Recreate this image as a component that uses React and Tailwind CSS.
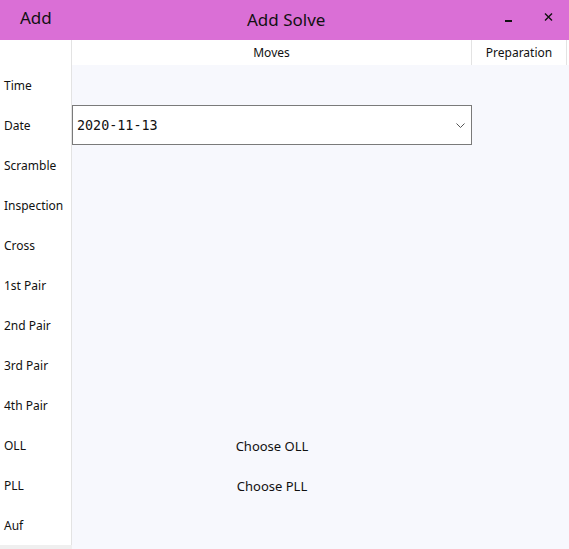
import React from 'react';

const labels = ['Time', 'Date', 'Scramble', 'Inspection', 'Cross', '1st Pair', '2nd Pair', '3rd Pair', '4th Pair', 'OLL', 'PLL', 'Auf'];

function Row({ children }) {
  return <div className="h-[40px] flex items-center">{children}</div>;
}

export default function App() {
  const font = { fontFamily: '"Noto Sans", "Open Sans", sans-serif' };
  return (
    <div className="w-[569px] h-[549px] flex flex-col bg-[#f7f8fd] text-[#111] overflow-hidden" style={font}>
      {/* title bar */}
      <div className="h-[40px] bg-[#da6fd6] flex items-center relative shrink-0">
        <span className="ml-[20px] text-[17px] leading-none -mt-[5px]">Add</span>
        <span className="absolute left-[247px] top-[11px] text-[17px] leading-none">Add Solve</span>
        <span className="absolute left-[505px] top-[20px] w-[7px] h-[2px] bg-[#111]" />
        <svg className="absolute left-[544px] top-[13px]" width="9" height="8" viewBox="0 0 9 8">
          <path d="M1 0.5 L8 7.5 M8 0.5 L1 7.5" stroke="#111" strokeWidth="1.4" />
        </svg>
      </div>

      <div className="flex-1 flex min-h-0">
        {/* labels */}
        <div className="w-[72px] shrink-0 flex flex-col">
          <div className="flex-1 bg-white border-r border-[#e3e3e3] flex flex-col">
            <div className="h-[25px]" />
            {labels.map((l) => (
              <Row key={l}>
                <span className="pl-[4px] pt-[2px] text-[12px] leading-none">{l}</span>
              </Row>
            ))}
          </div>
          <div className="h-[4px] bg-[#efefef]" />
        </div>

        {/* content */}
        <div className="flex-1 flex flex-col">
          <div className="h-[25px] bg-white flex text-[12px] shrink-0">
            <div className="w-[400px] border-r border-[#e3e3e3] flex items-center justify-center">Moves</div>
            <div className="w-[95px] border-r border-[#e3e3e3] flex items-center justify-center">Preparation</div>
            <div className="flex-1" />
          </div>
          <div className="flex flex-col">
            <Row />
            <Row>
              <div className="w-[400px] h-[40px] bg-white border border-[#7a7a7a] flex items-center justify-between pl-[4px] pr-[6px]">
                <span className="text-[13.4px] pt-[2px]" style={{ fontFamily: '"DejaVu Sans Mono", "Liberation Mono", monospace' }}>2020-11-13</span>
                <svg width="9" height="6" viewBox="0 0 9 6" className="mt-[1px]">
                  <path d="M0.5 0.5 L4.5 4.5 L8.5 0.5" fill="none" stroke="#555" strokeWidth="1" />
                </svg>
              </div>
            </Row>
            <Row />
            <Row />
            <Row />
            <Row />
            <Row />
            <Row />
            <Row />
            <Row>
              <div className="w-[400px] text-center text-[13px] pt-[3px]">Choose OLL</div>
            </Row>
            <Row>
              <div className="w-[400px] text-center text-[13px] pt-[3px]">Choose PLL</div>
            </Row>
            <Row />
          </div>
        </div>
      </div>
    </div>
  );
}
